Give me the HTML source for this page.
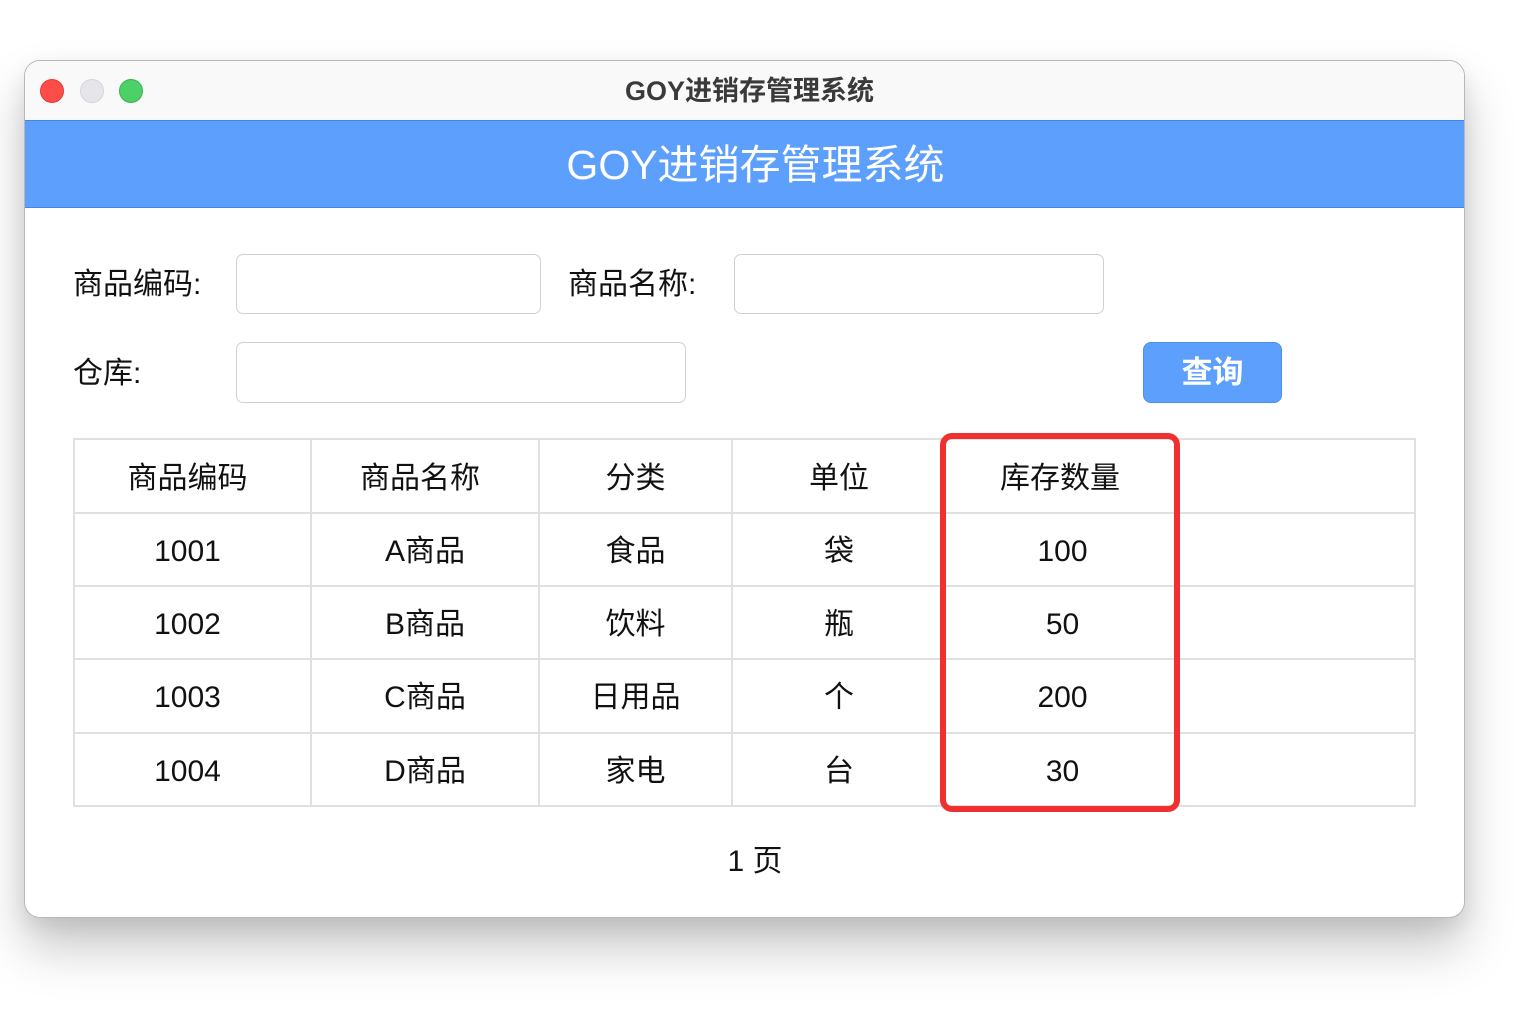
<!DOCTYPE html>
<html><head><meta charset="utf-8"><style>
*{margin:0;padding:0;box-sizing:border-box}
body{width:1536px;height:1024px;background:#fff;position:relative;overflow:hidden;font-family:"Liberation Sans","Noto Sans CJK SC",sans-serif;color:#111}
.win{position:absolute;left:24px;top:60px;width:1441px;height:858px;background:#fff;border:1px solid #b8b8b8;border-radius:16px;overflow:hidden;box-shadow:0 30px 50px rgba(0,0,0,0.22),0 8px 20px rgba(0,0,0,0.08)}
.tb{position:absolute;left:0;top:0;width:100%;height:60px;background:#f9f9f9;text-align:center;line-height:60px;font-size:27px;color:#3a3a3a;font-weight:bold;padding-left:10px}
.dot{position:absolute;top:18px;width:24px;height:24px;border-radius:50%}
.hd{position:absolute;left:0;top:59px;width:100%;height:88px;background:#5c9ffc;border-top:1px solid #3f86e8;border-bottom:1px solid #3f86e8;color:#fff;text-align:center;line-height:88px;font-size:41px;padding-left:22px}
.a{position:absolute}
.lbl{font-size:30px;line-height:40px}
.inp{position:absolute;border:1px solid #d0d0d0;border-radius:7px;background:#fff}
.btn{position:absolute;left:1118px;top:281px;width:139px;height:61px;background:#5c9ffc;border:1px solid #4a8ff0;border-radius:8px;color:#fff;font-size:31px;text-align:center;line-height:59px;font-weight:bold}
.h{position:absolute;height:2px;background:#e0e0e0}
.v{position:absolute;width:2px;background:#e0e0e0}
.c{position:absolute;text-align:center;font-size:30px;line-height:40px}
.red{position:absolute;left:915px;top:372px;width:240px;height:379px;border:6px solid #f0302e;border-radius:12px}
</style></head><body>
<div class="win">
<div class="tb">GOY进销存管理系统</div>
<div class="dot" style="left:15px;background:#fe4c48;border:1px solid #e03a36"></div>
<div class="dot" style="left:55px;background:#e6e6ea;border:1px solid #d4d4d8"></div>
<div class="dot" style="left:94px;background:#4dd068;border:1px solid #36b550"></div>
<div class="hd">GOY进销存管理系统</div>

<div class="a lbl" style="left:48px;top:204px">商品编码:</div>
<div class="inp" style="left:211px;top:193px;width:305px;height:60px"></div>
<div class="a lbl" style="left:543px;top:204px">商品名称:</div>
<div class="inp" style="left:709px;top:193px;width:370px;height:60px"></div>
<div class="a lbl" style="left:48px;top:293px">仓库:</div>
<div class="inp" style="left:211px;top:281px;width:450px;height:61px"></div>
<div class="btn">查询</div>

<div class="h" style="left:48px;top:377px;width:1343px"></div>
<div class="h" style="left:48px;top:451px;width:1343px"></div>
<div class="h" style="left:48px;top:524px;width:1343px"></div>
<div class="h" style="left:48px;top:597px;width:1343px"></div>
<div class="h" style="left:48px;top:671px;width:1343px"></div>
<div class="h" style="left:48px;top:744px;width:1343px"></div>
<div class="v" style="left:48px;top:377px;height:369px"></div>
<div class="v" style="left:285px;top:377px;height:369px"></div>
<div class="v" style="left:513px;top:377px;height:369px"></div>
<div class="v" style="left:706px;top:377px;height:369px"></div>
<div class="v" style="left:1389px;top:377px;height:369px"></div>

<div class="c" style="left:40px;width:245px;top:398px">商品编码</div>
<div class="c" style="left:282px;width:226px;top:398px">商品名称</div>
<div class="c" style="left:515px;width:191px;top:398px">分类</div>
<div class="c" style="left:708px;width:212px;top:398px">单位</div>
<div class="c" style="left:920px;width:230px;top:398px">库存数量</div>

<div class="c" style="left:40px;width:245px;top:471px">1001</div>
<div class="c" style="left:287px;width:226px;top:471px">A商品</div>
<div class="c" style="left:515px;width:191px;top:471px">食品</div>
<div class="c" style="left:708px;width:212px;top:471px">袋</div>
<div class="c" style="left:920px;width:235px;top:471px">100</div>

<div class="c" style="left:40px;width:245px;top:544px">1002</div>
<div class="c" style="left:287px;width:226px;top:544px">B商品</div>
<div class="c" style="left:515px;width:191px;top:544px">饮料</div>
<div class="c" style="left:708px;width:212px;top:544px">瓶</div>
<div class="c" style="left:920px;width:235px;top:544px">50</div>

<div class="c" style="left:40px;width:245px;top:617px">1003</div>
<div class="c" style="left:287px;width:226px;top:617px">C商品</div>
<div class="c" style="left:515px;width:191px;top:617px">日用品</div>
<div class="c" style="left:708px;width:212px;top:617px">个</div>
<div class="c" style="left:920px;width:235px;top:617px">200</div>

<div class="c" style="left:40px;width:245px;top:691px">1004</div>
<div class="c" style="left:287px;width:226px;top:691px">D商品</div>
<div class="c" style="left:515px;width:191px;top:691px">家电</div>
<div class="c" style="left:708px;width:212px;top:691px">台</div>
<div class="c" style="left:920px;width:235px;top:691px">30</div>

<div class="red"></div>
<div class="c" style="left:630px;width:200px;top:781px">1 页</div>
</div>
</body></html>
